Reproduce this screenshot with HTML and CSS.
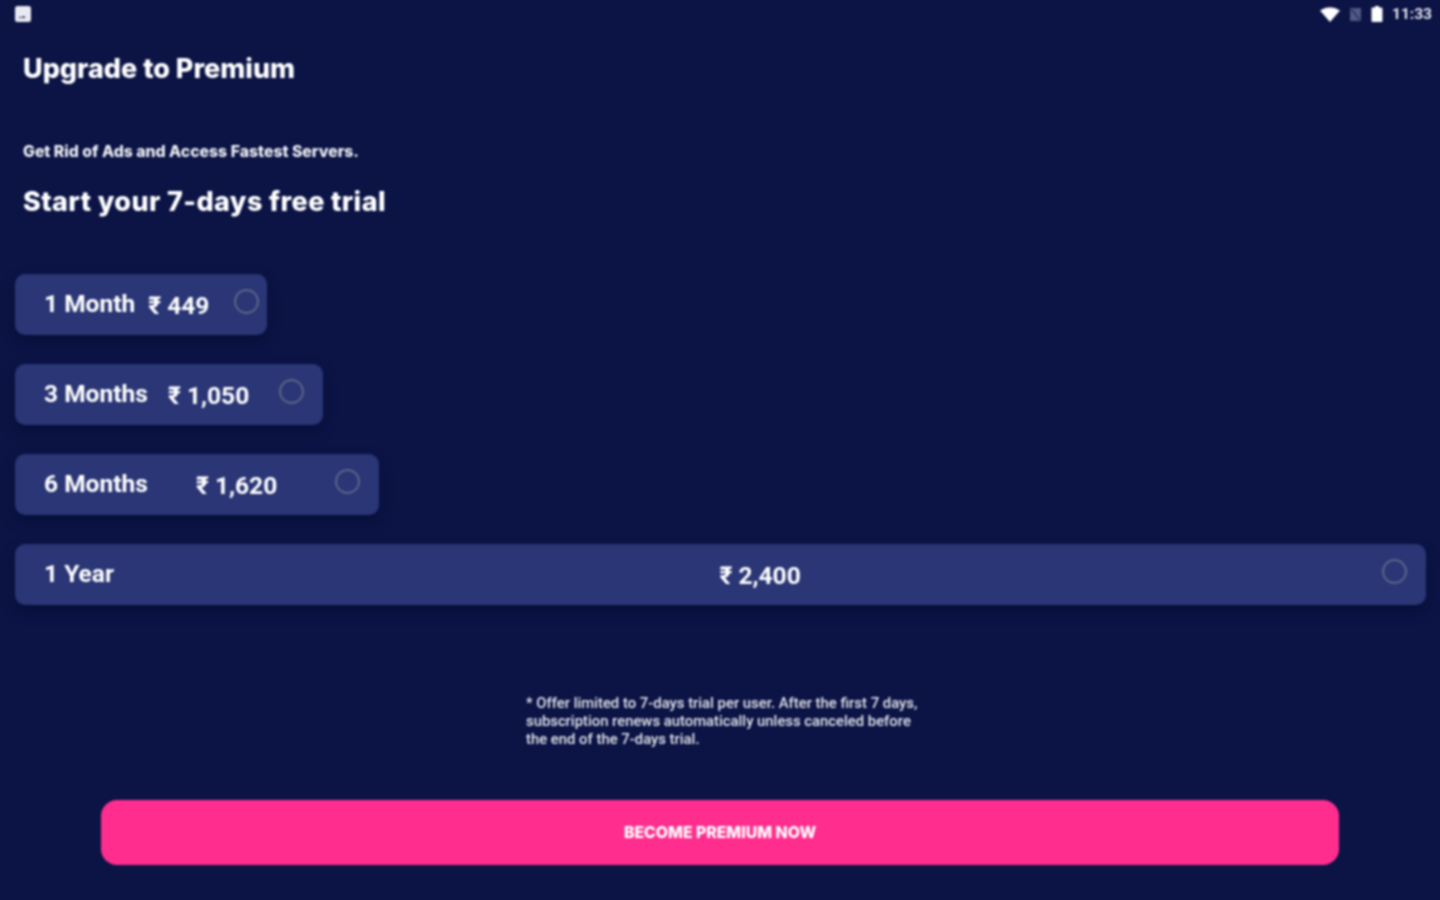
FILE: index.html
```html
<!DOCTYPE html>
<html lang="en">
<head>
<meta charset="utf-8">
<title>Upgrade to Premium</title>
<link rel="stylesheet" href="styles.css">
</head>
<body>
<div class="screen">
  <header class="status">
    <svg class="status-app" width="16" height="16" viewBox="0 0 16 16"><rect width="16" height="16" rx="2.5" fill="#e8e9f2"/><path d="M4 11h2v1H4zM7 10.500h3v1.500H7z" fill="#0b1445"/></svg>
    <div class="status-right">
      <svg width="20" height="15" viewBox="0 0 20 15"><path d="M0 3.500Q10-3 20 3.500L10 15z" fill="#fff"/></svg>
      <svg width="13" height="15" viewBox="0 0 13 15"><path d="M1 1h11v13H1z" fill="#505a84"/><path d="M2 2l9 11" stroke="#2a3468" stroke-width="1.500"/></svg>
      <svg width="12" height="16" viewBox="0 0 12 16"><path d="M4 0h4v1.500h2.500a1 1 0 0 1 1 1V15a1 1 0 0 1-1 1h-9a1 1 0 0 1-1-1V2.500a1 1 0 0 1 1-1H4z" fill="#fff"/></svg>
      <span class="clock">11:33</span>
    </div>
  </header>

  <h1 class="title">Upgrade to Premium</h1>
  <p class="subtitle">Get Rid of Ads and Access Fastest Servers.</p>
  <h2 class="trial">Start your 7-days free trial</h2>

  <section class="plans">
    <div class="plan plan-1m"><span class="plan-name">1 Month</span><span class="plan-price">₹ 449</span><span class="radio"></span></div>
    <div class="plan plan-3m"><span class="plan-name">3 Months</span><span class="plan-price">₹ 1,050</span><span class="radio"></span></div>
    <div class="plan plan-6m"><span class="plan-name">6 Months</span><span class="plan-price">₹ 1,620</span><span class="radio"></span></div>
    <div class="plan plan-1y"><span class="plan-name">1 Year</span><span class="plan-price">₹ 2,400</span><span class="radio"></span></div>
  </section>

  <p class="note">* Offer limited to 7-days trial per user. After the first 7 days, subscription renews automatically unless canceled before the end of the 7-days trial.</p>

  <button class="cta">BECOME PREMIUM NOW</button>
</div>
</body>
</html>
```
FILE: styles.css
```css
* { box-sizing: border-box; }
html, body { margin: 0; padding: 0; height: 100%; }
body {
  background: #0b1445;
  color: #fff;
  font-family: "Inter", "Liberation Sans", sans-serif;
  overflow: hidden;
}
.screen {
  width: 1440px;
  height: 900px;
  display: flex;
  flex-direction: column;
  filter: blur(0.9px);
}
.status {
  height: 28px;
  display: flex;
  align-items: center;
  justify-content: space-between;
  padding: 0 8px 0 15px;
}
.status-right { display: flex; align-items: center; gap: 9px; }
.status-right svg { flex: none; }
.clock {
  font-family: "Roboto", sans-serif;
  font-size: 15.500px;
  font-weight: 700;
  color: #e8e9f2;
}
.title {
  margin: 23px 0 0 23px;
  font-size: 27px;
  line-height: 36px;
  font-weight: 800;
}
.subtitle {
  margin: 55px 0 0 23px;
  font-size: 15.800px;
  line-height: 20px;
  font-weight: 800;
  color: #f1f1f6;
}
.trial {
  margin: 22px 0 0 23px;
  font-size: 27px;
  line-height: 36px;
  font-weight: 800;
  letter-spacing: 0.400px;
}
.plans {
  margin: 54px 0 0 15px;
  display: flex;
  flex-direction: column;
  align-items: flex-start;
  gap: 29px;
}
.plan {
  height: 61px;
  display: flex;
  align-items: center;
  padding: 0 19px 0 29px;
  background: #2a3675;
  border-radius: 10px;
  box-shadow: 0 6px 14px rgba(3, 8, 40, 0.45);
  font-family: "Roboto", sans-serif;
  font-weight: 700;
}
.plan-1m { width: 252px; padding-right: 8px; }
.plan-3m { width: 308px; }
.plan-6m { width: 364px; }
.plan-1y { width: 1411px; }
.plan-name {
  flex: 1 1 0;
  padding-right: 13px;
  font-size: 24.500px;
  white-space: nowrap;
  margin-bottom: 2px;
}
.plan-price {
  flex: 1 1 0;
  font-size: 24.500px;
  white-space: nowrap;
  margin-top: 2px;
}
.radio {
  flex: none;
  width: 25px;
  height: 25px;
  border: 2px solid #5b6488;
  border-radius: 50%;
  margin-bottom: 7px;
}
.note {
  margin: 89px 0 0 526px;
  width: 400px;
  font-family: "Roboto", sans-serif;
  font-size: 14.850px;
  line-height: 18px;
  font-weight: 500;
  color: #e6e7ee;
}
.cta {
  margin: 52px 0 0 101px;
  width: 1238px;
  height: 65px;
  border: 0;
  border-radius: 16px;
  background: #ff2d8e;
  color: #fff;
  font-family: "Inter", sans-serif;
  font-size: 15.800px;
  font-weight: 800;
}
```
